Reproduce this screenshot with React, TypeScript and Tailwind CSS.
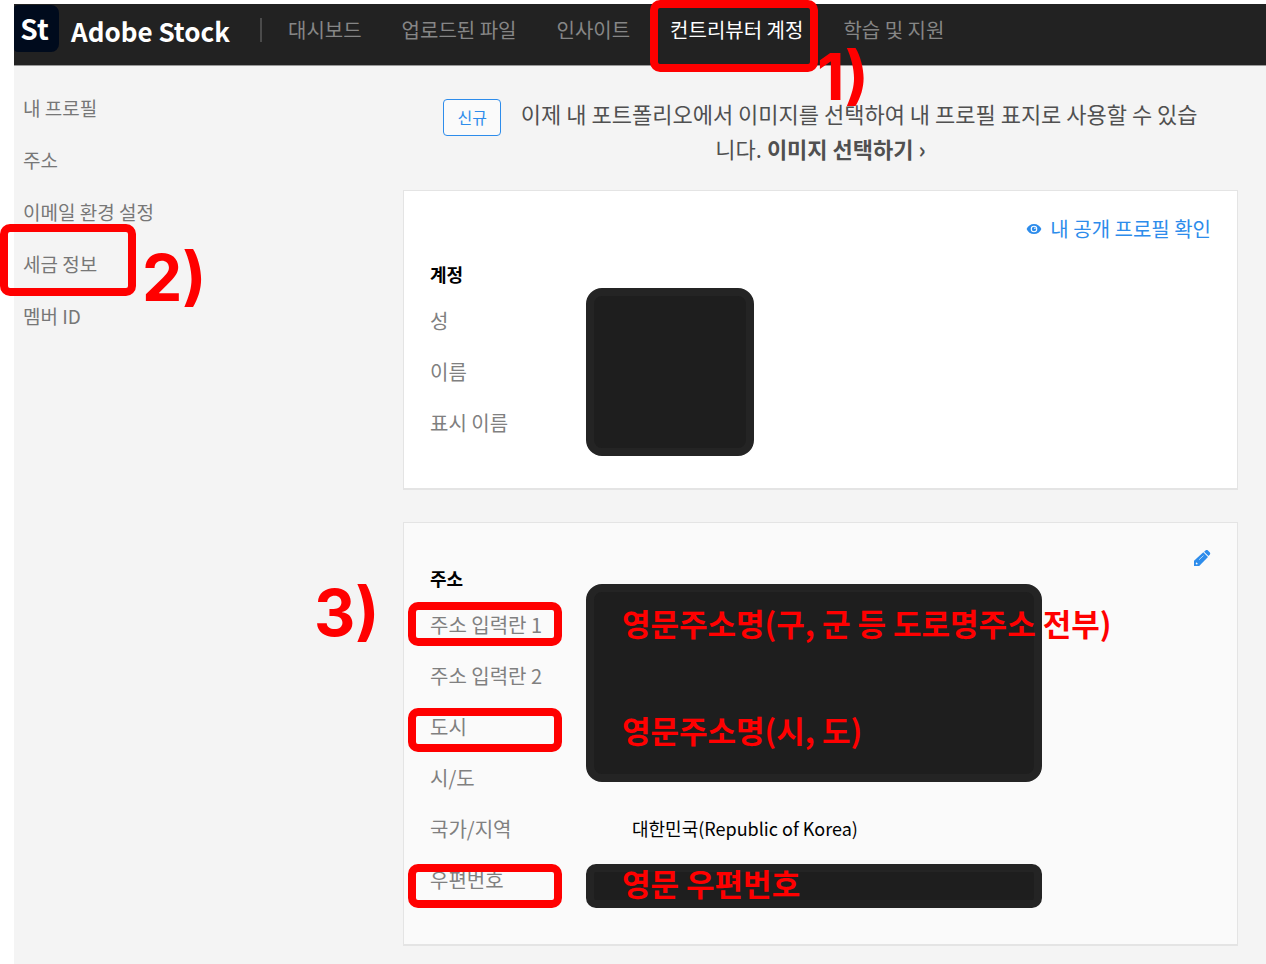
import type { ReactNode } from 'react';

const navItems = ['대시보드', '업로드된 파일', '인사이트', '컨트리뷰터 계정', '학습 및 지원'];

const sideItems = ['내 프로필', '주소', '이메일 환경 설정', '세금 정보', '멤버 ID'];

function Outline({ className }: { className: string }) {
  return (
    <span
      aria-hidden="true"
      className={`absolute z-10 border-8 border-[#ff0000] rounded-[10px] pointer-events-none ${className}`}
    />
  );
}

function Step({ className, children }: { className: string; children: ReactNode }) {
  return (
    <span
      className={`absolute z-10 font-['Inter',sans-serif] font-bold text-[64px] leading-none text-[#ff0000] whitespace-nowrap pointer-events-none ${className}`}
    >
      {children}
    </span>
  );
}

function Redacted({ className }: { className: string }) {
  return (
    <div
      aria-hidden="true"
      className={`absolute left-[156px] border-8 border-[#242424] bg-[#1e1e1e] ${className}`}
    />
  );
}

function Hint({ className, children }: { className: string; children: ReactNode }) {
  return (
    <dd
      className={`absolute z-10 left-48 text-[31px] leading-[51px] font-bold text-[#ff0000] whitespace-nowrap ${className}`}
    >
      {children}
    </dd>
  );
}

function Field({ label, children }: { label: string; children?: ReactNode }) {
  return (
    <div className="relative flex leading-[51px]">
      <dt className="w-[202px] shrink-0 text-[20px] text-[#808080]">{label}</dt>
      {children}
    </div>
  );
}

function EyeIcon() {
  return (
    <svg viewBox="0 0 16 12" className="w-4 h-3" fill="none" aria-hidden="true">
      <path
        fill="#2d8ceb"
        fillRule="evenodd"
        d="M8 1C4.600 1 1.800 3 .6 6 1.800 9 4.600 11 8 11s6.200-2 7.400-5C14.200 3 11.400 1 8 1Zm0 1.700a3.300 3.300 0 1 1 0 6.600 3.300 3.300 0 0 1 0-6.600Z"
      />
      <circle cx="8" cy="6" r="2.200" fill="#2d8ceb" />
      <circle cx="8.900" cy="5.200" r=".8" fill="#fff" />
    </svg>
  );
}

function PencilIcon() {
  return (
    <svg viewBox="0 0 18 18" className="w-[18px] h-[18px]" fill="none" aria-hidden="true">
      <path fill="#2d8ceb" d="M1 17v-5.200L10.300 3.200l4.700 4.700L6.200 17H1Z" />
      <path fill="#2d8ceb" d="m11.100 2.700 1.700-1.400c.6-.5 1.300-.5 1.900 0l2.200 2.300c.5.600.5 1.200 0 1.800L15.500 7Z" />
      <path stroke="#bcdcf9" strokeWidth=".9" d="m6 10.800 4.500-4.200" />
      <path fill="#fafafa" d="M3.200 13.200 5 15l-1.600.4-.7-.7Z" />
    </svg>
  );
}

export default function App() {
  return (
    <div className="min-h-screen bg-white pt-1 pl-[14px] flex flex-col font-['Noto_Sans_CJK_KR','Noto_Sans',sans-serif]">
      <header className="h-[62px] bg-[#222222] border-b border-[#999999] flex items-start">
        <a href="#" className="flex items-center h-[52px] text-white font-bold text-[26px] whitespace-nowrap">
          <span className="w-[45px] h-[47px] -mt-1 pr-1 rounded-r-lg rounded-l-sm bg-[#000b1d] flex items-center justify-center text-[28px]">
            St
          </span>
          <span className="ml-3">Adobe Stock</span>
        </a>
        <span className="w-[2px] h-6 mt-[14px] ml-[30px] bg-[#4b4b4b]" />
        <nav className="flex gap-10 ml-[26px] h-[52px] items-center text-[20px] whitespace-nowrap">
          {navItems.map((item) =>
            item === '컨트리뷰터 계정' ? (
              <a key={item} href="#" aria-current="page" className="relative text-white">
                {item}
                <Outline className="-left-5 -right-[15px] -top-[15px] h-[72px]" />
                <Step className="left-[147px] top-[30px]">1)</Step>
              </a>
            ) : (
              <a key={item} href="#" className="text-[#868686]">
                {item}
              </a>
            )
          )}
        </nav>
      </header>

      <div className="flex flex-1 bg-[#f4f4f4]">
        <aside className="w-[389px] shrink-0 pl-[9px] pt-7">
          <ul className="flex flex-col gap-6 text-[19px] leading-7 text-[#777777]">
            {sideItems.map((item) => (
              <li key={item} className="relative">
                <a href="#">{item}</a>
                {item === '세금 정보' && (
                  <>
                    <Outline className="-left-[23px] -top-[26px] w-[136px] h-[72px]" />
                    <Step className="left-[119px] -top-1">2)</Step>
                  </>
                )}
              </li>
            ))}
          </ul>
        </aside>

        <main className="flex-1 min-w-0 pr-7 pt-[30px] pb-[18px]">
          <p className="px-8 text-center text-[22px] leading-[35px] text-[#505050]">
            <span className="inline-flex items-center h-[37px] -my-2 px-[13px] mr-5 align-middle rounded-[4px] border border-[#2d8ceb] bg-[#fafafa] text-[16px] text-[#2d8ceb]">
              신규
            </span>
            이제 내 포트폴리오에서 이미지를 선택하여 내 프로필 표지로 사용할 수 있습니다.{' '}
            <a href="#" className="font-bold">
              이미지 선택하기 ›
            </a>
          </p>

          <section className="mt-6 bg-white border border-[#e4e4e4] border-b-2 px-[26px] pt-6 pb-10">
            <div className="flex justify-end">
              <a href="#" className="flex items-center gap-2 text-[20px] leading-7 text-[#2d8ceb]">
                <EyeIcon />내 공개 프로필 확인
              </a>
            </div>
            <h2 className="mt-[17px] text-[18px] leading-7 font-bold text-black">계정</h2>
            <dl className="relative mt-[7px]">
              <Field label="성" />
              <Field label="이름" />
              <Field label="표시 이름" />
              <Redacted className="-top-[7px] w-[168px] h-[168px] rounded-2xl" />
            </dl>
          </section>

          <section className="mt-8 bg-[#fafafa] border border-[#e4e4e4] border-b-2 px-[26px] pt-[21px] pb-[39px]">
            <div className="flex justify-between items-start">
              <h2 className="mt-5 text-[18px] leading-7 font-bold text-black">주소</h2>
              <button type="button" aria-label="주소 편집" className="flex items-center h-7">
                <PencilIcon />
              </button>
            </div>
            <dl className="relative mt-[7px]">
              <Redacted className="-top-[15px] w-[456px] h-[198px] rounded-2xl" />
              <Redacted className="top-[265px] w-[456px] h-11 rounded-[10px]" />
              <Field label="주소 입력란 1">
                <Step className="-left-[116px] -top-[18px]">3)</Step>
                <Outline className="-left-[22px] top-[3px] w-[154px] h-11" />
                <Hint className="-top-[2px]">영문주소명(구, 군 등 도로명주소 전부)</Hint>
              </Field>
              <Field label="주소 입력란 2" />
              <Field label="도시">
                <Outline className="-left-[22px] top-[7px] w-[154px] h-11" />
                <Hint className="top-[3px]">영문주소명(시, 도)</Hint>
              </Field>
              <Field label="시/도" />
              <Field label="국가/지역">
                <dd className="text-[18px] text-black">대한민국(Republic of Korea)</dd>
              </Field>
              <Field label="우편번호">
                <Outline className="-left-[22px] top-[10px] w-[154px] h-11" />
                <Hint className="top-[3px]">영문 우편번호</Hint>
              </Field>
            </dl>
          </section>
        </main>
      </div>
    </div>
  );
}
